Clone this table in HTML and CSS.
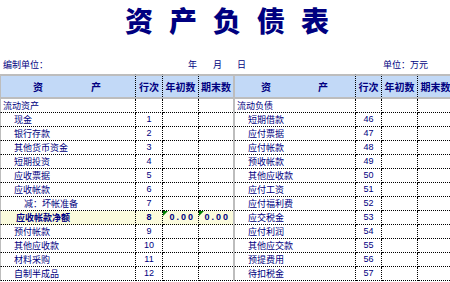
FILE: index.html
```html
<!DOCTYPE html>
<html lang="zh-CN">
<head>
<meta charset="utf-8">
<title>资产负债表</title>
<link rel="stylesheet" href="styles.css">
</head>
<body>
<div class="page">
  <h1 class="title">资产负债表</h1>
  <div class="meta">
    <span>编制单位：</span>
    <span>年</span>
    <span>月</span>
    <span>日</span>
    <span></span>
    <span>单位：万元</span>
  </div>
  <table class="sheet">
    <colgroup>
      <col class="c-name-l"><col class="c-no-l"><col class="c-num"><col class="c-num">
      <col class="c-name-r"><col class="c-no-r"><col class="c-num"><col class="c-num">
    </colgroup>
    <thead>
      <tr>
        <th class="name first"><span class="split split-l"><span>资</span><span>产</span></span></th>
        <th>行次</th>
        <th>年初数</th>
        <th class="sep">期末数</th>
        <th class="name"><span class="split split-r"><span>资</span><span>产</span></span></th>
        <th>行次</th>
        <th>年初数</th>
        <th>期末数</th>
      </tr>
    </thead>
    <tbody>
      <tr>
        <td class="name first l0">流动资产</td><td class="no"></td><td></td><td class="sep"></td>
        <td class="name r0">流动负债</td><td class="no"></td><td></td><td></td>
      </tr>
      <tr>
        <td class="name first l1">现金</td><td class="no">1</td><td></td><td class="sep"></td>
        <td class="name r1">短期借款</td><td class="no">46</td><td></td><td></td>
      </tr>
      <tr>
        <td class="name first l1">银行存款</td><td class="no">2</td><td></td><td class="sep"></td>
        <td class="name r1">应付票据</td><td class="no">47</td><td></td><td></td>
      </tr>
      <tr>
        <td class="name first l1">其他货币资金</td><td class="no">3</td><td></td><td class="sep"></td>
        <td class="name r1">应付帐款</td><td class="no">48</td><td></td><td></td>
      </tr>
      <tr>
        <td class="name first l1">短期投资</td><td class="no">4</td><td></td><td class="sep"></td>
        <td class="name r1">预收帐款</td><td class="no">49</td><td></td><td></td>
      </tr>
      <tr>
        <td class="name first l1">应收票据</td><td class="no">5</td><td></td><td class="sep"></td>
        <td class="name r1">其他应收款</td><td class="no">50</td><td></td><td></td>
      </tr>
      <tr>
        <td class="name first l1">应收帐款</td><td class="no">6</td><td></td><td class="sep"></td>
        <td class="name r1">应付工资</td><td class="no">51</td><td></td><td></td>
      </tr>
      <tr>
        <td class="name first l2">减：坏帐准备</td><td class="no">7</td><td></td><td class="sep"></td>
        <td class="name r1">应付福利费</td><td class="no">52</td><td></td><td></td>
      </tr>
      <tr class="total">
        <td class="name first lb hl">应收帐款净额</td><td class="no hl bold">8</td><td class="val hl"><span class="mark"></span>0.00</td><td class="val sep hl"><span class="mark"></span>0.00</td>
        <td class="name r1">应交税金</td><td class="no">53</td><td></td><td></td>
      </tr>
      <tr>
        <td class="name first l1">预付帐款</td><td class="no">9</td><td></td><td class="sep"></td>
        <td class="name r1">应付利润</td><td class="no">54</td><td></td><td></td>
      </tr>
      <tr>
        <td class="name first l1">其他应收款</td><td class="no">10</td><td></td><td class="sep"></td>
        <td class="name r1">其他应交款</td><td class="no">55</td><td></td><td></td>
      </tr>
      <tr>
        <td class="name first l1">材料采购</td><td class="no">11</td><td></td><td class="sep"></td>
        <td class="name r1">预提费用</td><td class="no">56</td><td></td><td></td>
      </tr>
      <tr>
        <td class="name first l1">自制半成品</td><td class="no">12</td><td></td><td class="sep"></td>
        <td class="name r1">待扣税金</td><td class="no">57</td><td></td><td></td>
      </tr>
    </tbody>
  </table>
</div>
</body>
</html>
```

FILE: styles.css
```css
* { box-sizing: border-box; }

html, body {
  margin: 0;
  padding: 0;
  background: #ffffff;
  overflow: hidden;
}

.page {
  width: 450px;
  height: 282px;
  overflow: hidden;
  color: #000080;
  font-family: "Noto Sans CJK SC", "Liberation Sans", sans-serif;
}

.title {
  margin: 0;
  padding: 5px 0 0 20px;
  height: 35px;
  font-size: 28px;
  line-height: 30px;
  font-weight: 900;
  letter-spacing: 16px;
  text-align: center;
  color: #000080;
  white-space: nowrap;
}

.meta {
  display: grid;
  grid-template-columns: 185px 25px 24px 1fr auto;
  margin-top: 24px;
  padding: 0 22px 0 3px;
  height: 12px;
  font-size: 9px;
  line-height: 12px;
}

.meta span:nth-child(5) { display: none; }

.sheet {
  margin-top: 3px;
  border-collapse: separate;
  border-spacing: 0;
  table-layout: fixed;
  width: 454px;
}

.c-name-l { width: 136px; }
.c-no-l { width: 27px; }
.c-num { width: 36px; }
.c-name-r { width: 121px; }
.c-no-r { width: 26px; }

.sheet th,
.sheet td {
  padding: 0;
  border-right: 1px dotted #000000;
  white-space: nowrap;
  overflow: hidden;
}

.sheet th {
  height: 25px;
  background: #c2d9f7;
  border-top: 2px solid #bdbdbd;
  border-bottom: 2px solid #bdbdbd;
  font-size: 10px;
  font-weight: 700;
  line-height: 20px;
  text-align: center;
}

.sheet td {
  height: 14px;
  border-bottom: 1px dotted #000000;
  font-size: 9px;
  line-height: 13px;
}

.sheet .first { border-left: 1px solid #bdbdbd; }
.sheet .sep { border-right: 2px solid #bdbdbd; }

.split {
  display: flex;
  justify-content: space-between;
}
.split-l { padding: 0 34px 0 32px; }
.split-r { padding: 0 27px 0 26px; }

.l0 { padding-left: 2px !important; }
.l1 { padding-left: 13px !important; }
.l2 { padding-left: 23px !important; }
.lb { padding-left: 15px !important; font-weight: 700; }
.r0 { padding-left: 2px !important; }
.r1 { padding-left: 13px !important; }

.no {
  text-align: center;
  font-family: "Liberation Sans", "Noto Sans CJK SC", sans-serif;
  font-size: 9px;
}

.bold { font-weight: 700; }

.hl { background: #fafadc; }

.val {
  position: relative;
  text-align: right;
  padding-right: 3px !important;
  font-family: "Liberation Sans", sans-serif;
  font-weight: 700;
  font-size: 10px;
  letter-spacing: 2px;
}

.mark {
  position: absolute;
  left: 0;
  top: 0;
  width: 0;
  height: 0;
  border-top: 5px solid #008000;
  border-right: 5px solid transparent;
}
```
